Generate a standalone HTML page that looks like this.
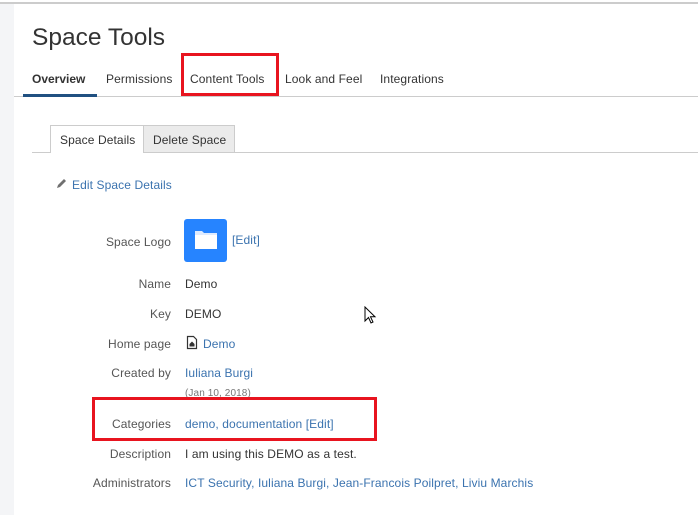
<!DOCTYPE html>
<html><head><meta charset="utf-8"><style>
*{margin:0;padding:0;box-sizing:border-box}
body{width:698px;height:515px;position:relative;overflow:hidden;background:#fff;font-family:"Liberation Sans",sans-serif;font-size:12px;color:#333;letter-spacing:0.1px}
.a{position:absolute;white-space:nowrap}
.lbl{position:absolute;right:527px;color:#555;text-align:right;white-space:nowrap}
.val{position:absolute;left:185px;white-space:nowrap}
.lnk{color:#3b73af}
.red{position:absolute;border:3px solid #e8141f}
</style></head><body>
<div class="a" style="left:0;top:2px;width:698px;height:2px;background:#ccc"></div>
<div class="a" style="left:0;top:4px;width:14px;height:511px;background:#f4f5f7"></div>
<div class="a" style="left:32px;top:24px;font-size:24.5px;color:#333;letter-spacing:0">Space Tools</div>
<div class="a" style="left:32px;top:72px;font-weight:bold;color:#333;letter-spacing:0">Overview</div>
<div class="a" style="left:106px;top:72px">Permissions</div>
<div class="a" style="left:190px;top:72px">Content Tools</div>
<div class="a" style="left:285px;top:72px">Look and Feel</div>
<div class="a" style="left:380px;top:72px">Integrations</div>
<div class="a" style="left:14px;top:96px;width:684px;height:1px;background:#ccc"></div>
<div class="a" style="left:23px;top:94px;width:74px;height:3px;background:#205081"></div>
<div class="red" style="left:181px;top:53px;width:98px;height:43px"></div>
<div class="a" style="left:32px;top:152px;width:666px;height:1px;background:#ccc"></div>
<div class="a" style="left:50px;top:125px;width:94px;height:28px;background:#fff;border:1px solid #ccc;border-bottom:none"></div>
<div class="a" style="left:60px;top:133px">Space Details</div>
<div class="a" style="left:143px;top:125px;width:92px;height:27px;background:#ebebeb;border:1px solid #ccc;border-bottom:none"></div>
<div class="a" style="left:153px;top:133px">Delete Space</div>
<svg class="a" style="left:55px;top:177px" width="13" height="13" viewBox="0 0 13 13"><path d="M2 11 L3 8 L9 2 L11 4 L5 10 Z" fill="#707070"/></svg>
<div class="a lnk" style="left:72px;top:178px">Edit Space Details</div>
<div class="lbl" style="top:235px">Space Logo</div>
<div class="a" style="left:184px;top:219px;width:43px;height:43px;background:#2684ff;border-radius:3px"></div>
<svg class="a" style="left:194px;top:229px" width="24" height="22" viewBox="0 0 24 22"><path d="M1 2 H8 L10 4 H23 V20 H1 Z" fill="#deebff"/><path d="M1 6 H23 V20 H1 Z" fill="#fff"/></svg>
<div class="a lnk" style="left:232px;top:233px">[Edit]</div>
<div class="lbl" style="top:277px">Name</div><div class="val" style="top:277px">Demo</div>
<div class="lbl" style="top:307px">Key</div><div class="val" style="top:307px">DEMO</div>
<div class="lbl" style="top:337px">Home page</div>
<svg class="a" style="left:186px;top:335px" width="12" height="15" viewBox="0 0 12 15"><path d="M1.5 1.5 H7.5 L10.5 4.5 V13.5 H1.5 Z" fill="none" stroke="#333" stroke-width="1.2"/><path d="M3.5 9 L6 6.5 L8.5 9 V11.5 H3.5 Z" fill="#333"/></svg>
<div class="val lnk" style="top:337px;left:203px">Demo</div>
<div class="lbl" style="top:366px">Created by</div><div class="val lnk" style="top:366px">Iuliana Burgi</div>
<div class="val" style="top:388px;font-size:10px;color:#777">(Jan 10, 2018)</div>
<div class="lbl" style="top:417px">Categories</div><div class="val lnk" style="top:417px">demo, documentation [Edit]</div>
<div class="red" style="left:92px;top:397px;width:285px;height:44px"></div>
<div class="lbl" style="top:447px">Description</div><div class="val" style="top:447px">I am using this DEMO as a test.</div>
<div class="lbl" style="top:476px">Administrators</div><div class="val lnk" style="top:476px">ICT Security, Iuliana Burgi, Jean-Francois Poilpret, Liviu Marchis</div>
<svg class="a" style="left:364px;top:306px" width="13" height="20" viewBox="0 0 13 20"><path d="M1 1 V15 L4.5 11.5 L7 17 L9 16 L6.5 10.8 H11 Z" fill="#fff" stroke="#000" stroke-width="1"/></svg>
</body></html>
